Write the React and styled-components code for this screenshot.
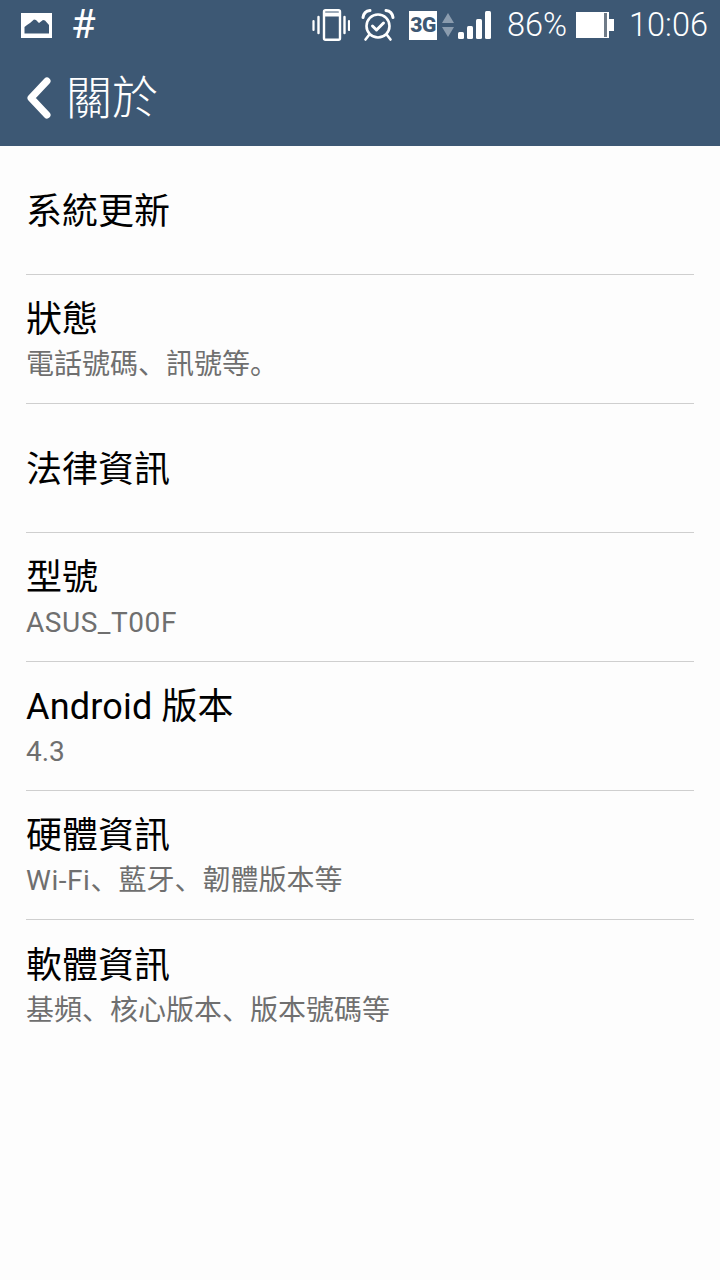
import React from 'react';
import styled, { createGlobalStyle } from 'styled-components';

const GlobalStyle = createGlobalStyle`
  html, body {
    margin: 0;
    padding: 0;
    background: #fdfdfd;
  }
  body {
    font-family: Roboto, "Noto Sans CJK SC", sans-serif;
  }
`;

const Page = styled.div`
  width: 720px;
  height: 1280px;
  overflow: hidden;
  background: #fdfdfd;
`;

const Header = styled.header`
  height: 146px;
  background: #3d5874;
  color: #fff;
`;

const StatusBar = styled.div`
  height: 50px;
  display: flex;
  align-items: center;
  padding: 0 12px 0 21px;
`;

const StatusLeft = styled.div`
  display: flex;
  align-items: center;
  gap: 19px;
  flex: 1;
`;

const StatusRight = styled.div`
  display: flex;
  align-items: center;
`;

const Hash = styled.span`
  font-size: 40px;
  line-height: 50px;
  font-weight: 400;
`;

const StatusText = styled.span`
  font-size: 32.5px;
  line-height: 50px;
  font-weight: 300;
  margin-left: ${(p) => p.$ml || 0}px;
`;

const Icon = styled.svg`
  display: block;
  flex: none;
  margin-left: ${(p) => p.$ml || 0}px;
`;

const TitleBar = styled.div`
  height: 96px;
  display: flex;
  align-items: center;
  gap: 14px;
  padding: 0 0 0 26px;
  box-sizing: border-box;
`;

const PageTitle = styled.h1`
  margin: 0;
  font-size: 46px;
  line-height: 60px;
  font-weight: 300;
`;

const List = styled.main`
  padding: 0 26px;
`;

const Row = styled.div`
  height: 129px;
  box-sizing: border-box;
  padding-top: 4px;
  border-bottom: ${(p) => (p.$last ? 'none' : '1px solid #cfcfcf')};
  display: flex;
  flex-direction: column;
  justify-content: center;
  gap: 2px;
`;

const RowTitle = styled.div`
  font-size: 36px;
  line-height: 46px;
  color: #000;
`;

const RowSub = styled.div`
  font-size: 28px;
  line-height: 40px;
  color: #6f6f6f;
`;

const Latin = styled.span`
  letter-spacing: ${(p) => p.$spacing}px;
`;

const rows = [
  { title: '系統更新' },
  { title: '狀態', sub: '電話號碼、訊號等。' },
  { title: '法律資訊' },
  { title: '型號', sub: 'ASUS_T00F' },
  { title: 'Android 版本', sub: '4.3' },
  { title: '硬體資訊', sub: 'Wi-Fi、藍牙、韌體版本等' },
  { title: '軟體資訊', sub: '基頻、核心版本、版本號碼等' },
];

// latin runs come out a touch wider than Roboto's default in the reference
const withLatin = (text, spacing) =>
  text.split(/([A-Za-z_-][A-Za-z0-9_-]*)/).map((part, i) =>
    i % 2 ? <Latin key={i} $spacing={spacing}>{part}</Latin> : part
  );

const PictureIcon = () => (
  <Icon width="31" height="25" viewBox="0 0 31 25">
    <path
      fillRule="evenodd"
      fill="#fff"
      d="M0 0h31v25H0z M3.5 20.5h24.5v-8.5l-4-4.5-2-.5-4 3-3-3-2-.5-4 3.5-3 2-2.5 2z"
    />
  </Icon>
);

const VibrateIcon = () => (
  <Icon width="38" height="32" viewBox="0 0 38 32" fill="none" stroke="#fff">
    <rect x="12" y="1.2" width="16" height="29.6" rx="1.5" strokeWidth="2.4" />
    <path d="M12 5.5h16" strokeWidth="4" />
    <path d="M6.5 8v16M32.5 8v16" strokeWidth="2.4" strokeLinecap="round" />
    <path d="M1.5 12v9M37 12v9" strokeWidth="2.2" strokeLinecap="round" />
  </Icon>
);

const AlarmIcon = () => (
  <Icon width="34" height="34" viewBox="0 0 34 34" fill="none" stroke="#fff" strokeWidth="2.6" $ml={11}>
    <circle cx="17" cy="18" r="11.5" />
    <path d="M11.5 18l4 4 7-7" strokeWidth="3" strokeLinecap="round" strokeLinejoin="round" />
    <path d="M2 9.5C2.5 5.5 5 3 9 2.5M32 9.5C31.5 5.5 29 3 25 2.5" strokeWidth="3" strokeLinecap="round" />
    <path d="M8 27l-3.5 4.5M26 27l3.5 4.5" strokeWidth="2.6" strokeLinecap="round" />
  </Icon>
);

const NetworkBadge = styled.span`
  width: 28px;
  height: 29px;
  margin-left: 14px;
  flex: none;
  background: #fff;
  color: #3d5874;
  font-size: 21px;
  line-height: 29px;
  font-weight: 900;
  text-align: center;
  letter-spacing: -0.5px;
`;

const ArrowsIcon = () => (
  <Icon width="12" height="24" viewBox="0 0 12 24" fill="#8b9cae" $ml={5}>
    <path d="M6 0l6 10H0z" />
    <path d="M6 24L0 14h12z" />
  </Icon>
);

const SignalIcon = () => (
  <Icon width="33" height="28" viewBox="0 0 33 28" fill="#fff" $ml={4}>
    <rect x="0" y="21" width="6" height="7" rx="1.5" />
    <rect x="9" y="15" width="6" height="13" rx="1.5" />
    <rect x="18" y="8" width="6" height="20" rx="1.5" />
    <rect x="27" y="0" width="6" height="28" rx="1.5" />
  </Icon>
);

const BatteryIcon = () => (
  <Icon width="38" height="26" viewBox="0 0 38 26" $ml={9}>
    <path fill="#fff" d="M0 0h33v7h5v12h-5v7H0z" />
    <rect x="28" y="1" width="3" height="24" fill="#6f7b88" />
  </Icon>
);

const BackIcon = () => (
  <Icon width="26" height="42" viewBox="0 0 26 42" fill="none" stroke="#fff" strokeWidth="7" strokeLinecap="round" strokeLinejoin="round">
    <path d="M21 4L5 21l16 17" />
  </Icon>
);

const App = () => (
  <Page>
    <GlobalStyle />
    <Header>
      <StatusBar>
        <StatusLeft>
          <PictureIcon />
          <Hash>#</Hash>
        </StatusLeft>
        <StatusRight>
          <VibrateIcon />
          <AlarmIcon />
          <NetworkBadge>3G</NetworkBadge>
          <ArrowsIcon />
          <SignalIcon />
          <StatusText $ml={16}>86%</StatusText>
          <BatteryIcon />
          <StatusText $ml={15}>10:06</StatusText>
        </StatusRight>
      </StatusBar>
      <TitleBar>
        <BackIcon />
        <PageTitle>關於</PageTitle>
      </TitleBar>
    </Header>
    <List>
      {rows.map((row, i) => (
        <Row key={row.title} $last={i === rows.length - 1}>
          <RowTitle>{withLatin(row.title, 0.2)}</RowTitle>
          {row.sub && <RowSub>{withLatin(row.sub, 0.55)}</RowSub>}
        </Row>
      ))}
    </List>
  </Page>
);

export default App;
